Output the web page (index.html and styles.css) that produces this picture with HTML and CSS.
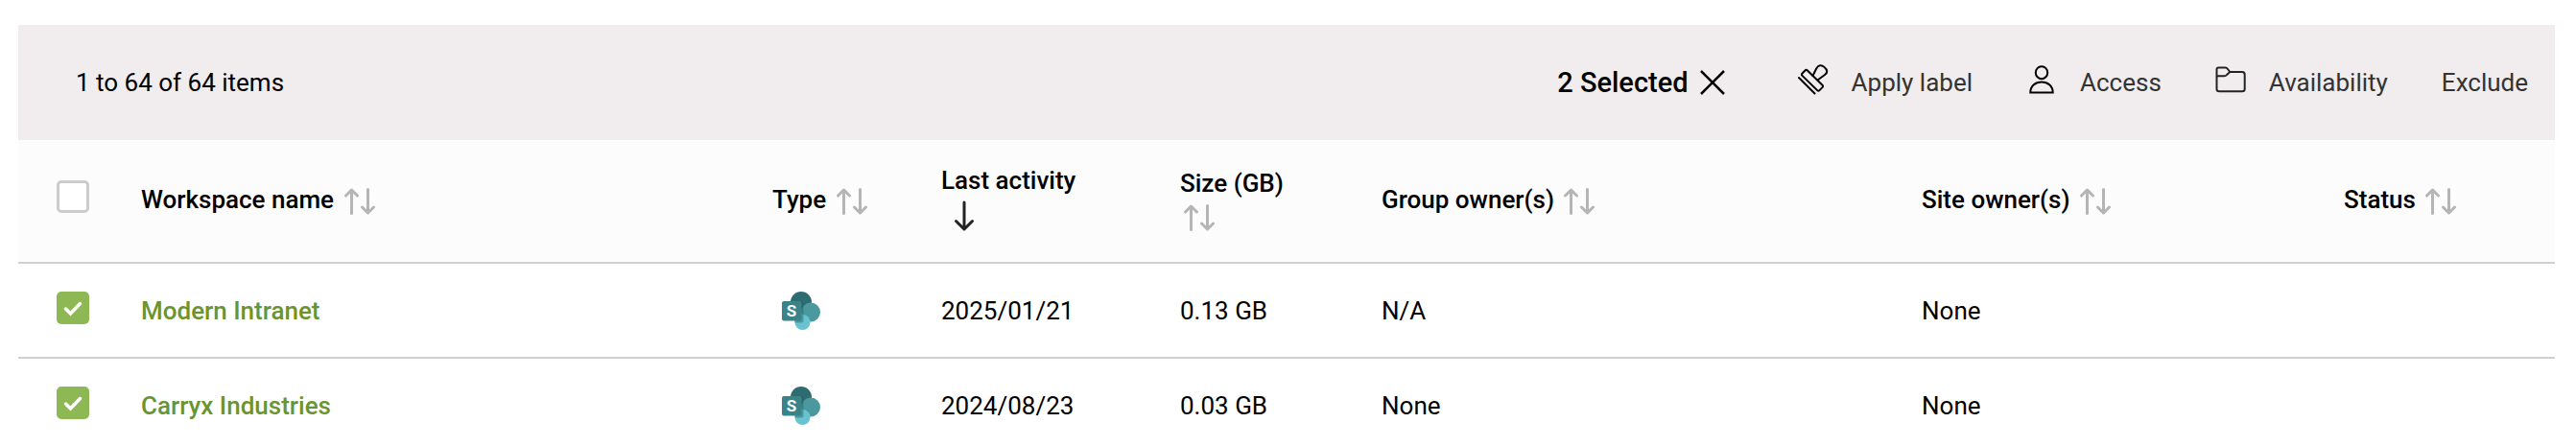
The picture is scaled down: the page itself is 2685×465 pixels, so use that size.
FILE: index.html
```html
<!DOCTYPE html>
<html lang="en">
<head>
    <meta charset="UTF-8">
    <meta name="viewport" content="width=device-width, initial-scale=1.0">
    <title>Workspaces</title>
    <link rel="stylesheet" href="styles.css">
</head>
<body>

<!-- Shared icons -->
<svg class="sprite" aria-hidden="true">
    <symbol id="icon-sort" viewBox="0 0 32 28">
        <path d="M7.5 26.5V2M1.5 8l6-6 6 6M24.500 1.500V26M18.500 20l6 6 6-6" fill="none" stroke="#b5b5b5" stroke-width="3" stroke-linecap="round" stroke-linejoin="round"/>
    </symbol>
    <symbol id="icon-sharepoint" viewBox="0 0 40 40">
        <circle cx="20" cy="11" r="11" fill="#2f6c71"/>
        <circle cx="30" cy="21.500" r="10" fill="#4b999f"/>
        <circle cx="21.500" cy="32" r="8" fill="#66c3cf"/>
        <path d="M11 10h9.500a2 2 0 0 1 2 2v18.500a2 2 0 0 1-2 2H13.500z" fill="#1f5a5f" opacity="0.4"/>
        <rect y="10" width="20.500" height="20.500" rx="2" fill="#3b8388"/>
        <text x="10" y="26" class="sharepoint-letter">S</text>
    </symbol>
</svg>

<main class="workspaces">
    <div class="toolbar">
        <span class="item-count">1 to 64 of 64 items</span>
        <div class="actions">
            <button type="button" class="selected">2 Selected
                <svg width="26" height="26" viewBox="0 0 26 26"><path d="M1 1l24 24M25 1L1 25" stroke="#000" stroke-width="2.500"/></svg>
            </button>
            <button type="button" class="action">
                <svg width="32" height="32" viewBox="0 0 32 32" fill="none" stroke="#000" stroke-width="2" stroke-linejoin="round" stroke-linecap="round">
                    <path d="M1 14l16.500 16.500"/>
                    <path d="M4.500 9.500l3-3q1.200-1.200 2.400 0l15.600 15.200q1.200 1.200 0 2.400l-3 3q-1.200 1.200-2.400 0L4.500 11.900q-1.200-1.200 0-2.400z"/>
                    <path d="M15.500 12l3.700-7.500c2-4 5.300-4 8-1.700 3.800 3 4 6.300.8 8.200L20.500 16.500"/>
                </svg>
                Apply label
            </button>
            <button type="button" class="action">
                <svg width="32" height="32" viewBox="0 0 32 32" fill="none" stroke="#000" stroke-width="2">
                    <ellipse cx="16" cy="8.700" rx="6.200" ry="6.500"/>
                    <path d="M4.300 29.500c0-6.500 5-11 11.700-11s11.700 4.500 11.700 11z"/>
                </svg>
                Access
            </button>
            <button type="button" class="action">
                <svg width="32" height="32" viewBox="0 0 32 32" fill="none" stroke="#222" stroke-width="2" stroke-linejoin="round">
                    <path d="M1.500 12.300V5.500q0-2 2-2h7q1.500 0 2.500 1.500l2.300 3H28q2.700 0 2.700 2.700v15q0 2.600-2.700 2.600H4.200q-2.700 0-2.700-2.600zh8q1.500 0 2.500-1.300l3.300-3"/>
                </svg>
                Availability
            </button>
            <button type="button" class="action">Exclude</button>
        </div>
    </div>

    <table class="grid">
        <colgroup>
            <col class="col-check">
            <col class="col-name">
            <col class="col-type">
            <col class="col-activity">
            <col class="col-size">
            <col class="col-group">
            <col class="col-site">
            <col class="col-status">
        </colgroup>
        <thead>
            <tr>
                <th class="check"><input type="checkbox" aria-label="Select all workspaces"></th>
                <th><button type="button" class="sort">Workspace name <svg class="sort-icon"><use href="#icon-sort"/></svg></button></th>
                <th><button type="button" class="sort">Type <svg class="sort-icon"><use href="#icon-sort"/></svg></button></th>
                <th aria-sort="descending"><button type="button" class="sort narrow">Last activity <svg class="sort-active" viewBox="0 0 40 40"><path d="M20 6v28M11.500 25.500L20 34l8.500-8.500" fill="none" stroke="#222" stroke-width="3" stroke-linecap="round" stroke-linejoin="round"/></svg></button></th>
                <th><button type="button" class="sort narrow">Size (GB) <svg class="sort-icon"><use href="#icon-sort"/></svg></button></th>
                <th><button type="button" class="sort">Group owner(s) <svg class="sort-icon"><use href="#icon-sort"/></svg></button></th>
                <th><button type="button" class="sort">Site owner(s) <svg class="sort-icon"><use href="#icon-sort"/></svg></button></th>
                <th><button type="button" class="sort">Status <svg class="sort-icon"><use href="#icon-sort"/></svg></button></th>
            </tr>
        </thead>
        <tbody>
            <tr>
                <td class="check"><input type="checkbox" aria-label="Select Modern Intranet" checked></td>
                <td><a href="#" class="name">Modern Intranet</a></td>
                <td class="type"><svg class="sharepoint"><use href="#icon-sharepoint"/></svg></td>
                <td>2025/01/21</td>
                <td>0.13 GB</td>
                <td>N/A</td>
                <td>None</td>
                <td></td>
            </tr>
            <tr>
                <td class="check"><input type="checkbox" aria-label="Select Carryx Industries" checked></td>
                <td><a href="#" class="name">Carryx Industries</a></td>
                <td class="type"><svg class="sharepoint"><use href="#icon-sharepoint"/></svg></td>
                <td>2024/08/23</td>
                <td>0.03 GB</td>
                <td>None</td>
                <td>None</td>
                <td></td>
            </tr>
        </tbody>
    </table>
</main>

</body>
</html>
```
FILE: styles.css
```css
body {
    font-family: Roboto, "Liberation Sans", sans-serif;
    font-size: 26px;
    line-height: 32px;
    color: #000;
    background-color: #fff;
    height: 100vh;
    margin: 0;
    overflow: hidden;
}

.sprite {
    display: none;
}

.workspaces {
    padding: 26px 22px 0 19px;
}

button {
    font: inherit;
    color: inherit;
    background: none;
    border: none;
    padding: 0;
    cursor: pointer;
}

.toolbar {
    display: flex;
    justify-content: space-between;
    align-items: center;
    height: 120px;
    padding: 0 28px 0 60px;
    background-color: #f1edee;
}

.actions {
    display: flex;
    align-items: center;
    gap: 56px;
}

.selected {
    display: flex;
    align-items: center;
    gap: 12px;
    margin-right: 20px;
    font-size: 29px;
    font-weight: 500;
}

.action {
    display: flex;
    align-items: center;
    gap: 24px;
    color: #333;
}

.action svg {
    margin-bottom: 6px;
}

.grid {
    width: 100%;
    table-layout: fixed;
    border-collapse: separate;
    border-spacing: 0;
}

.col-check { width: 128px; }
.col-name { width: 658px; }
.col-type { width: 176px; }
.col-activity { width: 249px; }
.col-size { width: 210px; }
.col-group { width: 563px; }
.col-site { width: 440px; }

th, td {
    padding: 0;
    text-align: left;
    border-bottom: 2px solid #d0d0d0;
}

th {
    height: 124px;
    padding-bottom: 3px;
    font-weight: 500;
    line-height: 34px;
    background-color: #fcfcfc;
}

td {
    height: 97px;
}

.sort {
    text-align: left;
}

.narrow {
    width: 145px;
}

.sort-icon {
    width: 32px;
    height: 28px;
    margin-left: 4px;
    vertical-align: -7px;
}

.sort-active {
    width: 40px;
    height: 40px;
    margin-left: 4px;
    vertical-align: middle;
}

.check {
    padding-left: 40px;
}

input[type="checkbox"] {
    appearance: none;
    display: block;
    width: 34px;
    height: 34px;
    margin: 0 0 6px;
    border: 3px solid #ccc;
    border-radius: 5px;
    background-color: #fff;
}

input[type="checkbox"]:checked {
    border-color: #8db854;
    background: #8db854 url("data:image/svg+xml,%3Csvg xmlns='http://www.w3.org/2000/svg' viewBox='0 0 28 28'%3E%3Cpath d='M6.500 15l5 5L21.500 9.500' fill='none' stroke='white' stroke-width='3.500' stroke-linecap='round'/%3E%3C/svg%3E") center / 28px no-repeat;
}

.name {
    color: #6a942f;
    font-weight: 500;
    text-decoration: none;
}

.type {
    padding-left: 10px;
}

.sharepoint {
    display: block;
    width: 40px;
    height: 40px;
}

.sharepoint-letter {
    font-size: 17px;
    font-weight: 700;
    fill: #fff;
    text-anchor: middle;
}
```
